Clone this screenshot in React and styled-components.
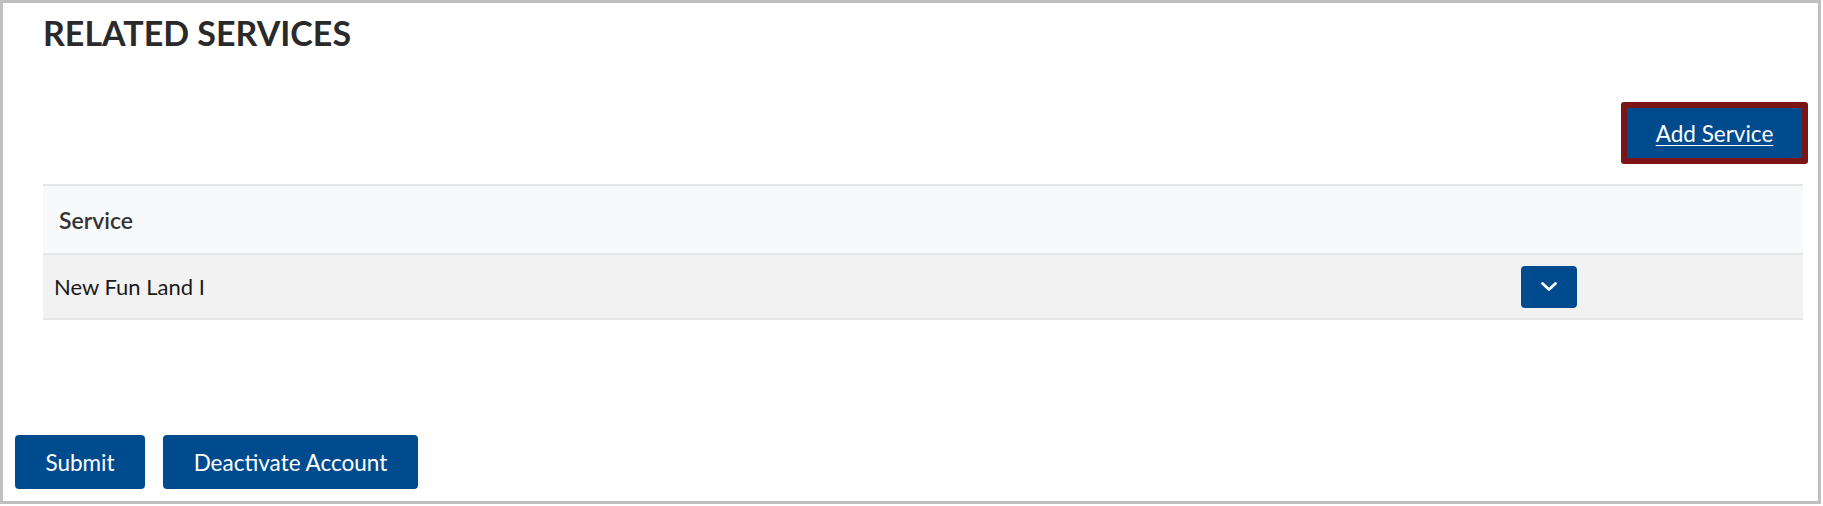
import React from "react";
import styled, { createGlobalStyle } from "styled-components";

const Global = createGlobalStyle`
  html, body { margin: 0; padding: 0; background: #ffffff; }
  body { font-family: Lato, "Open Sans", "Liberation Sans", sans-serif; }
  * { box-sizing: border-box; }
`;

const Frame = styled.div`
  width: 1821px;
  height: 504px;
  border: 3px solid #c0c0c0;
  background: #fff;
  display: flex;
  flex-direction: column;
`;

const Section = styled.section`
  padding: ${(p) => (p.$top ? "12px" : "0")} 10px 0 40px;
  display: flex;
  flex-direction: column;
`;

const Title = styled.h2`
  margin: 0;
  font-size: 34px;
  line-height: 36px;
  font-weight: 700;
  color: #2a2a2a;
`;

const Toolbar = styled.div`
  display: flex;
  justify-content: flex-end;
  margin-top: 51px;
`;

const FocusButton = styled.button`
  font-family: Lato, "Open Sans", sans-serif;
  font-size: 22.5px;
  color: #fff;
  background: #004b8d;
  border: 6px solid #7a1416;
  border-radius: 3px;
  height: 62px;
  width: 187px;
  text-decoration: underline;
  text-decoration-thickness: 1px;
  text-underline-offset: 3px;
  cursor: pointer;
  padding: 0;
`;

const Table = styled.div`
  margin-top: 20px;
  margin-right: 5px;
  display: flex;
  flex-direction: column;
`;

const Row = styled.div`
  display: grid;
  grid-template-columns: 1fr 282px;
  align-items: center;
  height: ${(p) => p.$h}px;
  background: ${(p) => p.$bg};
  border-top: 2px solid #e4e6e8;
  ${(p) => (p.$last ? "border-bottom: 2px solid #e4e6e8;" : "")}
`;

const Cell = styled.div`
  padding-left: ${(p) => p.$pl || 0}px;
  font-size: ${(p) => p.$size || 22}px;
  color: ${(p) => p.$color || "#1a1a1a"};
  font-weight: ${(p) => p.$weight || 400};
`;

const IconButton = styled.button`
  width: 56px;
  height: 42px;
  border: none;
  border-radius: 4px;
  background: #004b8d;
  display: flex;
  align-items: center;
  justify-content: center;
  cursor: pointer;
  padding: 0;
`;

const Footer = styled.div`
  margin-top: auto;
  padding: 0 0 12px 12px;
  display: flex;
  gap: 18px;
`;

const ActionButton = styled.button`
  font-family: Lato, "Open Sans", sans-serif;
  font-size: 22.5px;
  color: #fff;
  background: #004b8d;
  border: none;
  border-radius: 4px;
  height: 54px;
  width: ${(p) => p.$w}px;
  cursor: pointer;
  padding: 0;
`;

export default function App() {
  return (
    <>
      <Global />
      <Frame>
        <Section $top>
          <Title>RELATED SERVICES</Title>
          <Toolbar>
            <FocusButton>Add Service</FocusButton>
          </Toolbar>
        </Section>
        <Section>
          <Table>
            <Row $h={69} $bg="#f8f9fa">
              <Cell $pl={16} $size={23} $color="#333" $weight={600}>Service</Cell>
              <Cell />
            </Row>
            <Row $h={67} $bg="#f2f2f2" $last>
              <Cell $pl={11}>New Fun Land I</Cell>
              <Cell>
                <IconButton aria-label="Expand">
                  <svg width="20" height="12" viewBox="0 0 20 12">
                    <path d="M3.5 2.5 L10 8.5 L16.5 2.5" fill="none" stroke="#fff" strokeWidth="2.8" strokeLinecap="round" strokeLinejoin="round" />
                  </svg>
                </IconButton>
              </Cell>
            </Row>
          </Table>
        </Section>
        <Footer>
          <ActionButton $w={130}>Submit</ActionButton>
          <ActionButton $w={255}>Deactivate Account</ActionButton>
        </Footer>
      </Frame>
    </>
  );
}
